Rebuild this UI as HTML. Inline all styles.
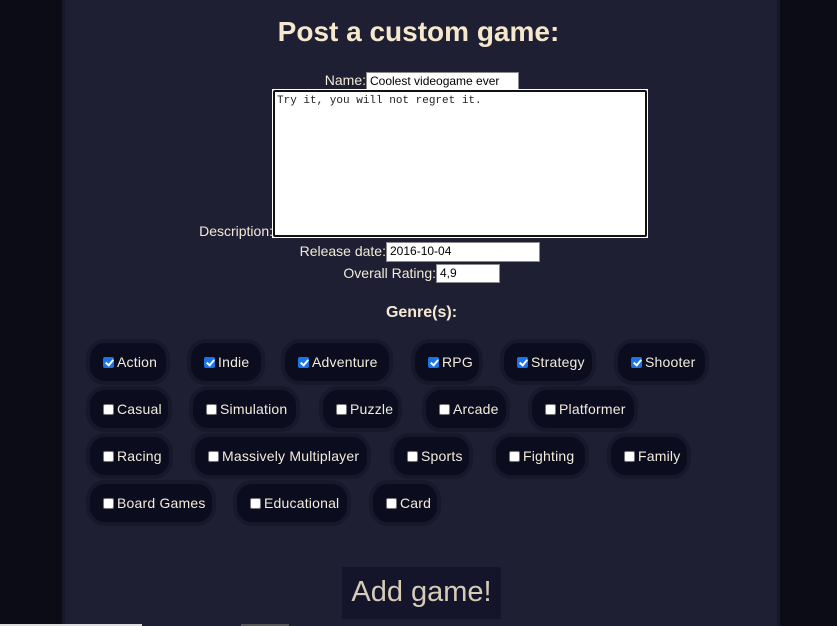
<!DOCTYPE html>
<html><head><meta charset="utf-8"><style>
*{box-sizing:border-box;margin:0;padding:0}
body{width:837px;height:626px;overflow:hidden;background:#0b0c15;font-family:"Liberation Sans",sans-serif;position:relative;color:#f3ead8}
.panel{position:absolute;left:62px;top:0;width:718px;height:626px;background:#1e1f33;border-left:3px solid #181928;border-right:3px solid #181928}
.t{position:absolute;white-space:nowrap}
h1{position:absolute;left:0;width:837px;text-align:center;top:16px;font-size:28px;font-weight:bold;color:#f6e8cc}
.lab{position:absolute;font-size:14px;color:#f3ead8;text-align:right;white-space:nowrap}
.inp{position:absolute;background:#fff;border:1px solid #8a8a8a;color:#000;font-size:12px;padding:2px 3px;line-height:13px}
.pill{position:absolute;height:46px;border:4px solid #17182a;background:#0b0c1e;border-radius:19px;font-size:14px;color:#f2ecdc;white-space:nowrap}
.pill span{position:absolute;left:13px;top:11px;line-height:16px;letter-spacing:0.2px}
.cb{display:inline-block;width:11px;height:11px;background:#fff;border:1px solid #777;border-radius:2px;vertical-align:-1px;margin-right:3px;position:relative}
.on{background:#1a73e8;border-color:#1a73e8}
.on:after{content:"";position:absolute;left:3px;top:0px;width:3px;height:6px;border:solid #fff;border-width:0 2px 2px 0;transform:rotate(40deg)}
</style></head><body>
<div class="panel"></div>
<h1>Post a custom game:</h1>
<div class="lab" style="left:300px;width:66px;top:72px">Name:</div>
<div class="inp" style="left:366px;top:72px;width:153px;height:18px">Coolest videogame ever</div>
<div class="lab" style="left:190px;width:83px;top:223px">Description:</div>
<div style="position:absolute;left:272px;top:89px;width:376px;height:149px;background:#fff;border:1px solid #fff;"><div style="width:100%;height:100%;border:2px solid #111;border-radius:2px;font-family:'Liberation Mono',monospace;font-size:11px;color:#222;padding:3px 2px">Try it, you will not regret it.</div></div>
<div class="lab" style="left:286px;width:100px;top:243px">Release date:</div>
<div class="inp" style="left:386px;top:242px;width:154px;height:20px">2016-10-04</div>
<div class="lab" style="left:320px;width:116px;top:265px">Overall Rating:</div>
<div class="inp" style="left:436px;top:264px;width:64px;height:19px">4,9</div>
<div class="t" style="left:3px;width:837px;text-align:center;top:304px;font-size:16px;font-weight:bold;color:#f6ead4">Genre(s):</div>

<div class="pill" style="left:86px;top:339px;width:84px"><span><i class="cb on"></i>Action</span></div>
<div class="pill" style="left:187px;top:339px;width:78px"><span><i class="cb on"></i>Indie</span></div>
<div class="pill" style="left:281px;top:339px;width:112px"><span><i class="cb on"></i>Adventure</span></div>
<div class="pill" style="left:411px;top:339px;width:72px"><span><i class="cb on"></i>RPG</span></div>
<div class="pill" style="left:500px;top:339px;width:96px"><span><i class="cb on"></i>Strategy</span></div>
<div class="pill" style="left:614px;top:339px;width:95px"><span><i class="cb on"></i>Shooter</span></div>

<div class="pill" style="left:86px;top:386px;width:86px"><span><i class="cb"></i>Casual</span></div>
<div class="pill" style="left:189px;top:386px;width:111px"><span><i class="cb"></i>Simulation</span></div>
<div class="pill" style="left:319px;top:386px;width:83px"><span><i class="cb"></i>Puzzle</span></div>
<div class="pill" style="left:422px;top:386px;width:88px"><span><i class="cb"></i>Arcade</span></div>
<div class="pill" style="left:528px;top:386px;width:110px"><span><i class="cb"></i>Platformer</span></div>

<div class="pill" style="left:86px;top:433px;width:87px"><span><i class="cb"></i>Racing</span></div>
<div class="pill" style="left:191px;top:433px;width:180px"><span><i class="cb"></i>Massively Multiplayer</span></div>
<div class="pill" style="left:390px;top:433px;width:83px"><span><i class="cb"></i>Sports</span></div>
<div class="pill" style="left:492px;top:433px;width:97px"><span><i class="cb"></i>Fighting</span></div>
<div class="pill" style="left:607px;top:433px;width:84px"><span><i class="cb"></i>Family</span></div>

<div class="pill" style="left:86px;top:480px;width:130px"><span><i class="cb"></i>Board Games</span></div>
<div class="pill" style="left:233px;top:480px;width:118px"><span><i class="cb"></i>Educational</span></div>
<div class="pill" style="left:369px;top:480px;width:72px"><span><i class="cb"></i>Card</span></div>

<div style="position:absolute;left:342px;top:567px;width:159px;height:52px;background:#14152a;color:#d6cbb6;font-size:29px;text-align:center;line-height:50px">Add game!</div>
<div style="position:absolute;left:0;top:624px;width:142px;height:2px;background:#ddd"></div>
<div style="position:absolute;left:241px;top:624px;width:48px;height:2px;background:#555"></div>
</body></html>
